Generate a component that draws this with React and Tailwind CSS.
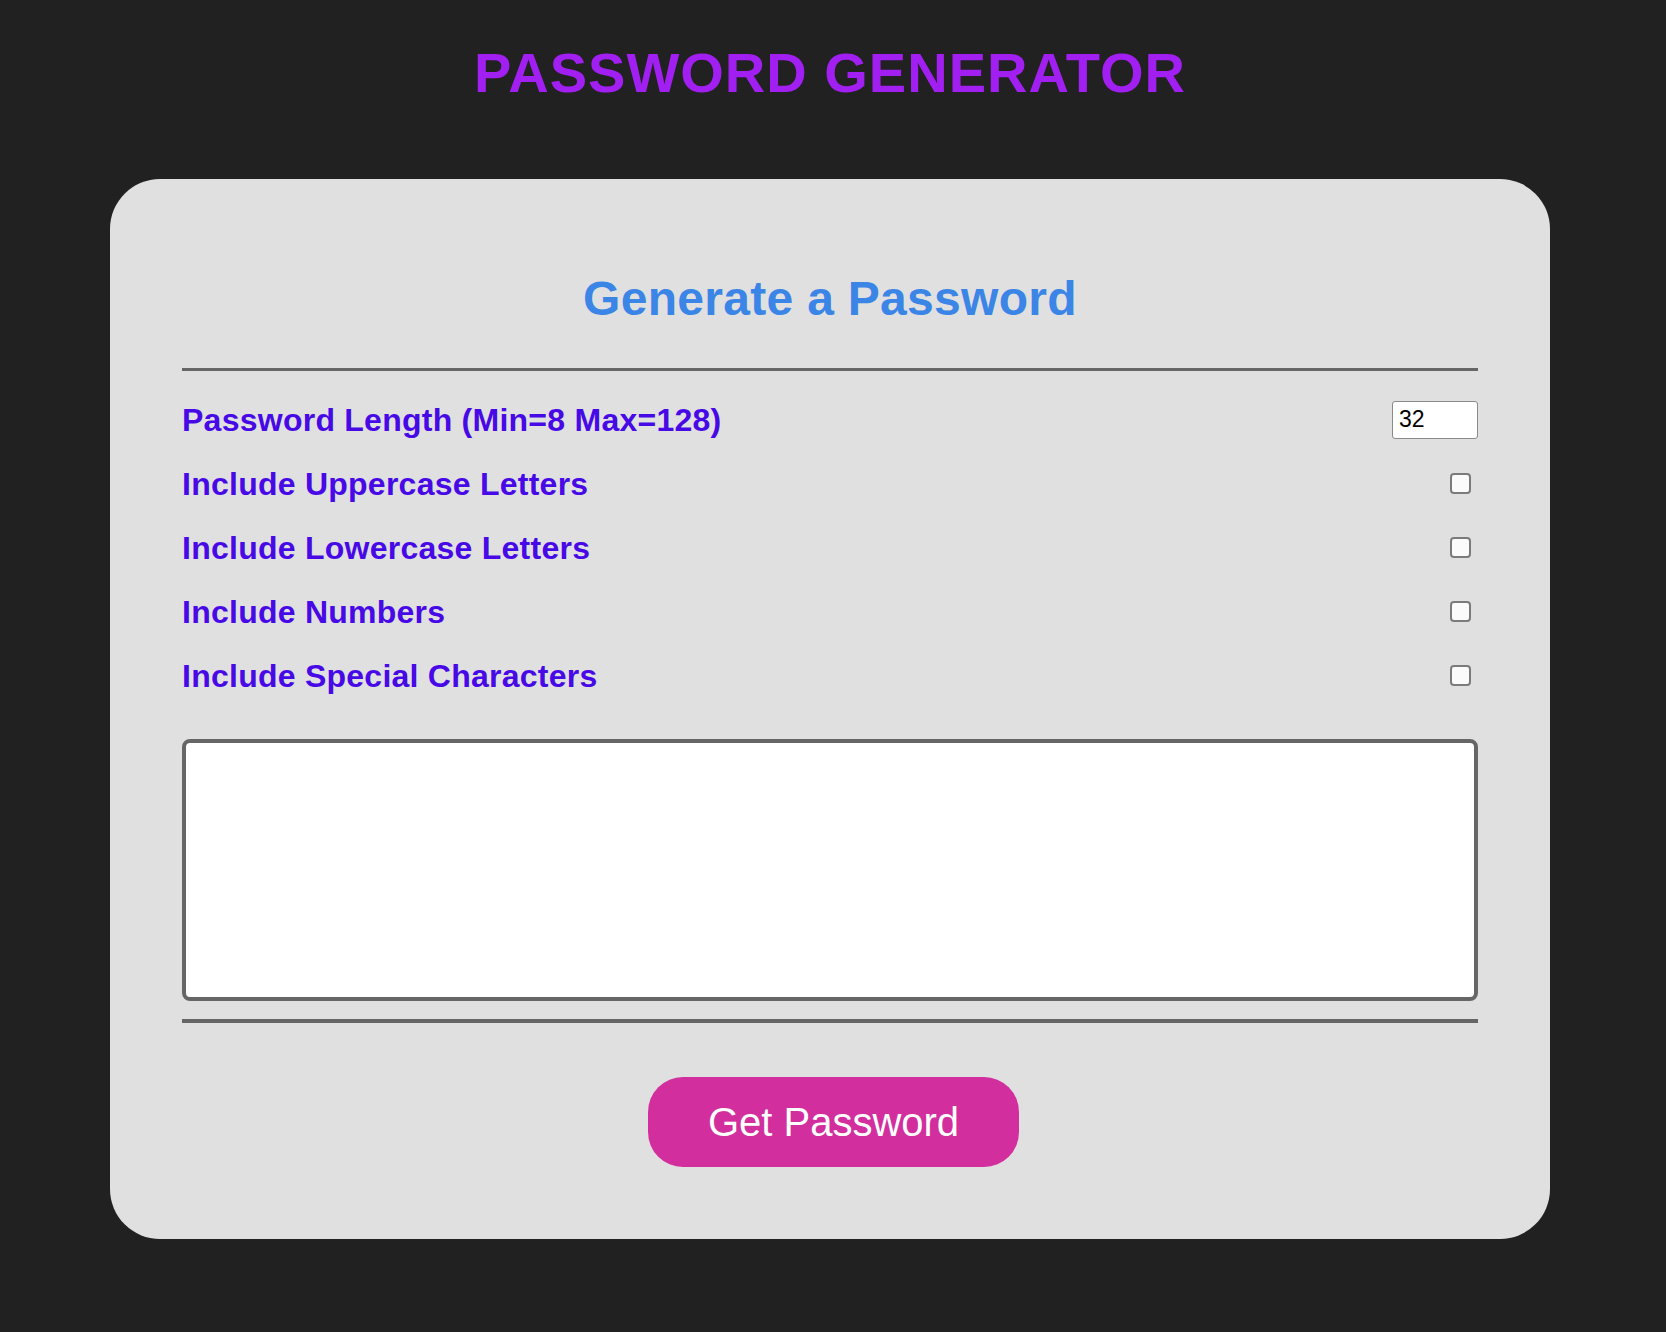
import { useState } from 'react';

const options = [
  'Include Uppercase Letters',
  'Include Lowercase Letters',
  'Include Numbers',
  'Include Special Characters',
];

export default function App() {
  const [length, setLength] = useState('32');
  const [checked, setChecked] = useState({});
  const [password, setPassword] = useState('');

  return (
    <div className="min-h-screen w-full bg-[#212121] font-['Liberation_Sans',Arial,sans-serif]">
      <div className="w-[1660px]">
        <h1 className="pt-[41px] text-center text-[56px] leading-[64px] font-bold tracking-[1px] text-[#a21ff1]">
          PASSWORD GENERATOR
        </h1>

        <div className="mx-[110px] mt-[74px] rounded-[50px] bg-[#e0e0e0] px-[72px] pt-[92px] pb-[72px]">
          <h2 className="text-center text-[48px] leading-[56px] font-bold tracking-[0.3px] text-[#3b85e6]">
            Generate a Password
          </h2>
          <div className="mt-[41px] h-[3px] bg-[#666]" />

          <div className="mt-[16px]">
            <div className="flex h-[65px] items-center justify-between">
              <label className="text-[32px] leading-[40px] font-bold tracking-[0.25px] text-[#4709e6]">
                Password Length (Min=8 Max=128)
              </label>
              <input
                type="text"
                value={length}
                onChange={(e) => setLength(e.target.value)}
                className="h-[38px] w-[86px] rounded-[3px] border border-[#8a8a8a] bg-white px-[6px] text-[23px] text-black outline-none"
              />
            </div>
            {options.map((opt) => (
              <div key={opt} className="flex h-[64px] items-center justify-between">
                <label className="text-[32px] leading-[40px] font-bold tracking-[0.25px] text-[#4709e6]">{opt}</label>
                <input
                  type="checkbox"
                  checked={!!checked[opt]}
                  onChange={() => setChecked({ ...checked, [opt]: !checked[opt] })}
                  className="mr-[7px] mb-[1px] h-[21px] w-[21px] appearance-none rounded-[4px] border-2 border-[#7b7b7b] bg-[#fbfbfb]"
                />
              </div>
            ))}
          </div>

          <textarea
            value={password}
            onChange={(e) => setPassword(e.target.value)}
            className="mt-[31px] block h-[262px] w-full resize-none rounded-[8px] border-4 border-[#666] bg-white p-3 text-[20px] outline-none"
          />
          <div className="mt-[18px] h-[4px] bg-[#666]" />

          <div className="mt-[54px] flex justify-center pl-[7px]">
            <button
              onClick={() => setPassword('')}
              className="h-[90px] w-[371px] rounded-[35px] bg-[#d22e9d] text-[40px] text-white"
            >
              Get Password
            </button>
          </div>
        </div>
      </div>
    </div>
  );
}
